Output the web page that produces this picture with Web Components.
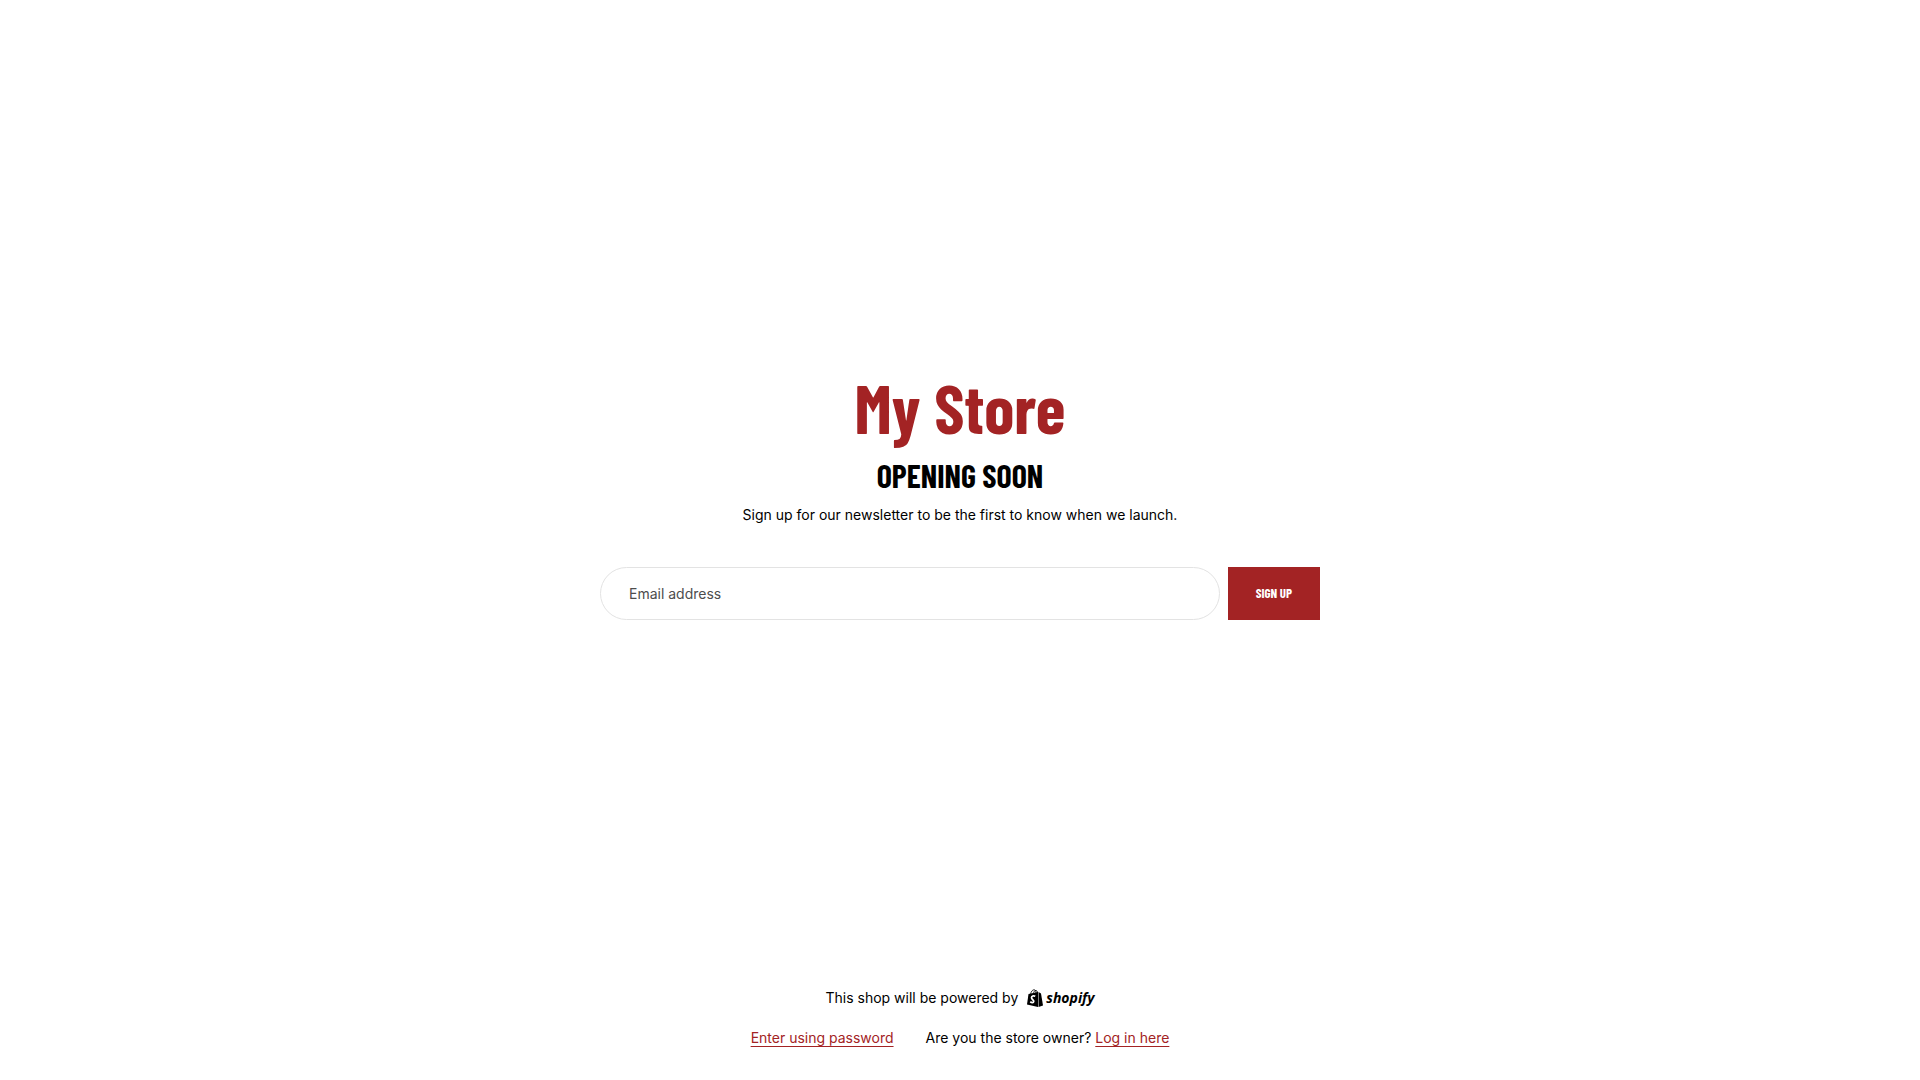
<!DOCTYPE html>
<html lang="en">
<head>
<meta charset="utf-8">
<meta name="viewport" content="width=device-width, initial-scale=1">
<title>My Store – Opening Soon</title>
<style>
  html, body { margin: 0; }
  body { background: #fff; }
</style>
</head>
<body>
<store-page>
  <store-hero slot="main" name="My Store">
    <span slot="heading">Opening soon</span>
    <span slot="text">Sign up for our newsletter to be the first to know when we launch.</span>
    <newsletter-form></newsletter-form>
  </store-hero>
  <store-footer slot="footer"></store-footer>
</store-page>
<script>
const define = (name, html, setup) => {
  const template = document.createElement('template');
  template.innerHTML = html;
  customElements.define(name, class extends HTMLElement {
    constructor() {
      super();
      this.attachShadow({ mode: 'open' }).append(template.content.cloneNode(true));
    }
    connectedCallback() { if (setup) setup(this); }
  });
};

define('store-page', `
<style>
  :host {
    --accent: #a32324;
    --display: "Barlow Condensed", "Roboto Condensed", "Liberation Sans Narrow", "Liberation Sans", sans-serif;
    display: flex; flex-direction: column; min-height: 100vh;
    font: 14px/24px Inter, sans-serif; color: #000;
  }
  main { flex: 1; display: flex; align-items: center; justify-content: center; padding: 0 24px; }
  footer { padding: 0 24px 30px; }
</style>
<main><slot name="main"></slot></main>
<footer><slot name="footer"></slot></footer>`);

define('store-hero', `
<style>
  :host { display: block; width: 100%; max-width: 720px; text-align: center; }
  h1, h2, p { margin: 0; }
  h1 { font: 700 68px/80px var(--display); color: var(--accent); }
  h2 { font: 700 32px/40px var(--display); text-transform: uppercase; margin-top: 8px; }
  p { margin: 8px 0 40px; }
</style>
<h1></h1>
<h2><slot name="heading"></slot></h2>
<p><slot name="text"></slot></p>
<slot></slot>`, el => { el.shadowRoot.querySelector('h1').textContent = el.getAttribute('name'); });

define('newsletter-form', `
<style>
  :host { display: block; }
  form { display: flex; gap: 8px; }
  label { position: absolute; width: 1px; height: 1px; overflow: hidden; clip-path: inset(50%); }
  input {
    flex: 1; min-width: 0; box-sizing: border-box; height: 53px; padding: 0 28px;
    border: 1px solid #e3e3e3; border-radius: 27px; background: #fff;
    font: inherit; color: #000;
  }
  input::placeholder { color: #4d4d4d; opacity: 1; }
  button {
    border: 0; padding: 0 28px; background: var(--accent); color: #fff;
    font: 700 13px/20px var(--display); text-transform: uppercase; cursor: pointer;
  }
</style>
<form>
  <label for="email">Email address</label>
  <input id="email" type="email" placeholder="Email address" autocomplete="email">
  <button type="submit">Sign up</button>
</form>`);

define('shopify-logo', `
<style>
  :host { display: inline-flex; align-items: center; gap: 3px; }
  svg { display: block; width: 16px; height: 18px; }
  span { font: italic 700 14px/18px "Open Sans", sans-serif; }
</style>
<svg viewBox="0 0 32 36" aria-hidden="true">
  <path d="M3 10 22 6 22 36 0 31Z"/>
  <path d="M23 6 28 9 32 33 23 36Z"/>
  <path d="M7 11C8 5 11 1.500 14 1.500 17 1.500 18 4 18 8M13 10C13 5 15 3 18 3 20 3 21 5 21 8" fill="none" stroke="#000" stroke-width="1.600"/>
  <path d="M16.500 14.500C13 12.500 9 14 9 17.500 9 21.500 14 21.500 13.500 25 13 28.500 9 27.500 6.500 25.500" fill="none" stroke="#fff" stroke-width="3.400"/>
</svg>
<span>shopify</span>`);

define('store-footer', `
<style>
  :host { display: flex; flex-direction: column; align-items: center; gap: 16px; }
  .powered { display: flex; align-items: center; gap: 9px; }
  .links { display: flex; flex-wrap: wrap; justify-content: center; gap: 8px 32px; }
  a { color: var(--accent); text-underline-offset: 3px; }
</style>
<div class="powered"><span>This shop will be powered by</span><shopify-logo></shopify-logo></div>
<div class="links">
  <a href="#password">Enter using password</a>
  <span>Are you the store owner? <a href="#login">Log in here</a></span>
</div>`);
</script>
</body>
</html>
